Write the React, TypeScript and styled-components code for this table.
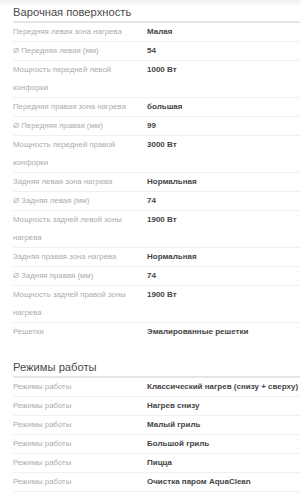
import styled, { createGlobalStyle } from 'styled-components';

type Spec = {
  label: string;
  value: string;
};

type Section = {
  title: string;
  specs: Spec[];
  lastBorder: boolean;
};

const sections: Section[] = [
  {
    title: 'Варочная поверхность',
    lastBorder: false,
    specs: [
      { label: 'Передняя левая зона нагрева', value: 'Малая' },
      { label: 'Ø Передняя левая (мм)', value: '54' },
      { label: 'Мощность передней левой конфорки', value: '1000 Вт' },
      { label: 'Передняя правая зона нагрева', value: 'большая' },
      { label: 'Ø Передняя правая (мм)', value: '99' },
      { label: 'Мощность передней правой конфорки', value: '3000 Вт' },
      { label: 'Задняя левая зона нагрева', value: 'Нормальная' },
      { label: 'Ø Задняя левая (мм)', value: '74' },
      { label: 'Мощность задней левой зоны нагрева', value: '1900 Вт' },
      { label: 'Задняя правая зона нагрева', value: 'Нормальная' },
      { label: 'Ø Задняя правая (мм)', value: '74' },
      { label: 'Мощность задней правой зоны нагрева', value: '1900 Вт' },
      { label: 'Решетки', value: 'Эмалированные решетки' },
    ],
  },
  {
    title: 'Режимы работы',
    lastBorder: true,
    specs: [
      { label: 'Режимы работы', value: 'Классический нагрев (снизу + сверху)' },
      { label: 'Режимы работы', value: 'Нагрев снизу' },
      { label: 'Режимы работы', value: 'Малый гриль' },
      { label: 'Режимы работы', value: 'Большой гриль' },
      { label: 'Режимы работы', value: 'Пицца' },
      { label: 'Режимы работы', value: 'Очистка паром AquaClean' },
    ],
  },
];

const GlobalStyle = createGlobalStyle`
  html, body {
    margin: 0;
    background: #ffffff;
  }

  body {
    font-family: "Liberation Sans", Arial, sans-serif;
    overflow: hidden;
  }
`;

const Page = styled.div`
  position: relative;
  padding-left: 13px;
  width: 300px;
  box-sizing: border-box;

  &::before {
    content: '';
    position: absolute;
    left: 0;
    right: 0;
    top: 0;
    height: 6px;
    background: linear-gradient(#efefef, rgba(255, 255, 255, 0));
  }
`;

const Block = styled.section`
  & + & {
    margin-top: 13px;
  }
`;

const Title = styled.h2`
  margin: 0;
  padding: 4px 0 1px;
  border-bottom: 2px solid #e6e6e6;
  color: #4a4a4a;
  font-size: 11.2px;
  font-weight: normal;
  line-height: 16px;
`;

const List = styled.dl`
  margin: 0;
`;

const Row = styled.div<{ $border: boolean }>`
  display: grid;
  grid-template-columns: 134px 1fr;
  border-bottom: 1px solid ${({ $border }) => ($border ? '#f0f0f0' : 'transparent')};
  line-height: 18px;
`;

const Label = styled.dt`
  margin: 0;
  padding-right: 4px;
  color: #acacac;
  font-size: 7.8px;
`;

const Value = styled.dd`
  margin: 0;
  color: #444444;
  font-size: 8px;
  font-weight: bold;
  white-space: nowrap;
`;

export default function App() {
  return (
    <>
      <GlobalStyle />
      <Page>
        {sections.map((section) => (
          <Block key={section.title}>
            <Title>{section.title}</Title>
            <List>
              {section.specs.map((spec, index) => (
                <Row
                  key={`${spec.label}-${index}`}
                  $border={section.lastBorder || index < section.specs.length - 1}
                >
                  <Label>{spec.label}</Label>
                  <Value>{spec.value}</Value>
                </Row>
              ))}
            </List>
          </Block>
        ))}
      </Page>
    </>
  );
}
